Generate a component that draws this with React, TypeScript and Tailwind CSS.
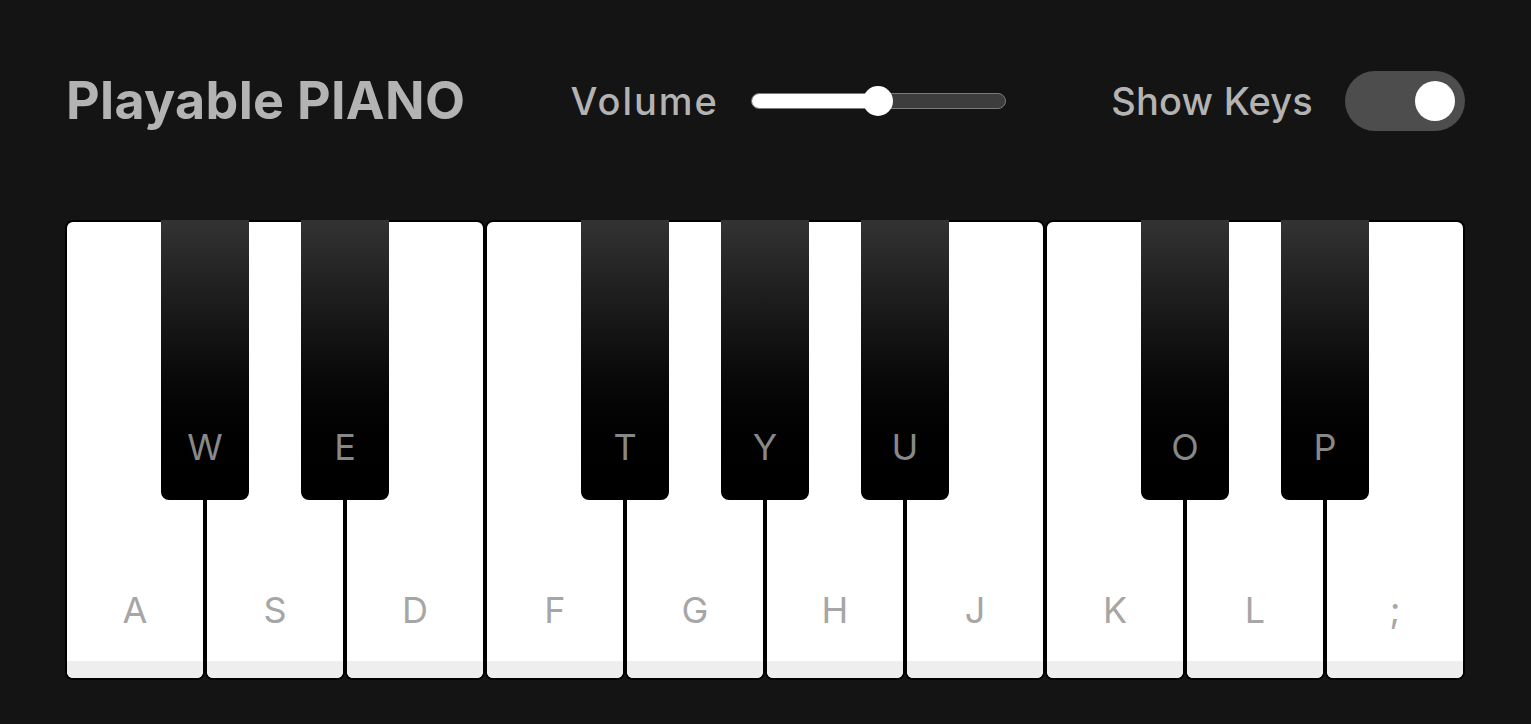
import React, { useState } from "react";

const whiteKeys = ["A", "S", "D", "F", "G", "H", "J", "K", "L", ";"];
// black keys sit on the boundary after white key index
const blackKeys = [
  { label: "W", after: 1 },
  { label: "E", after: 2 },
  { label: "T", after: 4 },
  { label: "Y", after: 5 },
  { label: "U", after: 6 },
  { label: "O", after: 8 },
  { label: "P", after: 9 },
];

const font = { fontFamily: "Inter, 'Noto Sans', sans-serif" };

export default function App() {
  const [volume] = useState(0.5);
  const [showKeys, setShowKeys] = useState(true);

  return (
    <div
      className="min-h-screen w-full bg-[#141414] pl-[65px] pt-[71px]"
      style={font}
    >
      {/* Header */}
      <header className="flex h-[60px] w-[1400px] items-center justify-between">
        <h1 className="pl-[1px] text-[52px] font-bold leading-none tracking-[0.3px] text-[#b3b3b3]">
          Playable PIANO
        </h1>

        <div className="flex items-center gap-8">
          <span className="text-[38px] font-medium leading-none tracking-[2px] text-[#b3b3b3]">
            Volume
          </span>
          <div className="relative h-[16px] w-[255px] rounded-full border border-[#7a7a7a] bg-[#3d3d3d]">
            <div
              className="h-full rounded-full bg-white"
              style={{ width: `${volume * 100}%` }}
            />
            <div
              className="absolute top-1/2 h-[30px] w-[30px] -translate-x-1/2 -translate-y-1/2 rounded-full bg-white"
              style={{ left: `${volume * 100}%` }}
            />
          </div>
        </div>

        <div className="flex items-center gap-8">
          <span className="text-[38px] font-medium leading-none tracking-[0.2px] text-[#b3b3b3]">
            Show Keys
          </span>
          <button
            onClick={() => setShowKeys(!showKeys)}
            className={`flex h-[60px] w-[120px] items-center rounded-full bg-[#4d4d4d] px-[10px] ${
              showKeys ? "justify-end" : "justify-start"
            }`}
          >
            <span className="h-[40px] w-[40px] rounded-full bg-white" />
          </button>
        </div>
      </header>

      {/* Piano */}
      <div className="relative mt-[89px] flex w-[1400px]">
        {whiteKeys.map((k) => (
          <div
            key={k}
            className="flex h-[460px] w-[140px] flex-col justify-end overflow-hidden rounded-lg border-2 border-black bg-white"
          >
            <span className="mb-[33px] text-center text-[36px] font-normal leading-none text-[#a6a6a6]">
              {showKeys ? k : ""}
            </span>
            <div className="h-[17px] bg-[#eeeeee]" />
          </div>
        ))}

        {blackKeys.map((b) => (
          <div
            key={b.label}
            className="absolute top-0 flex h-[280px] w-[88px] flex-col justify-end rounded-b-lg bg-gradient-to-b from-[#333333] to-black pb-[35px]"
            style={{ left: b.after * 140 - 44 }}
          >
            <span className="text-center text-[36px] font-normal leading-none text-[#888888]">
              {showKeys ? b.label : ""}
            </span>
          </div>
        ))}
      </div>
    </div>
  );
}
